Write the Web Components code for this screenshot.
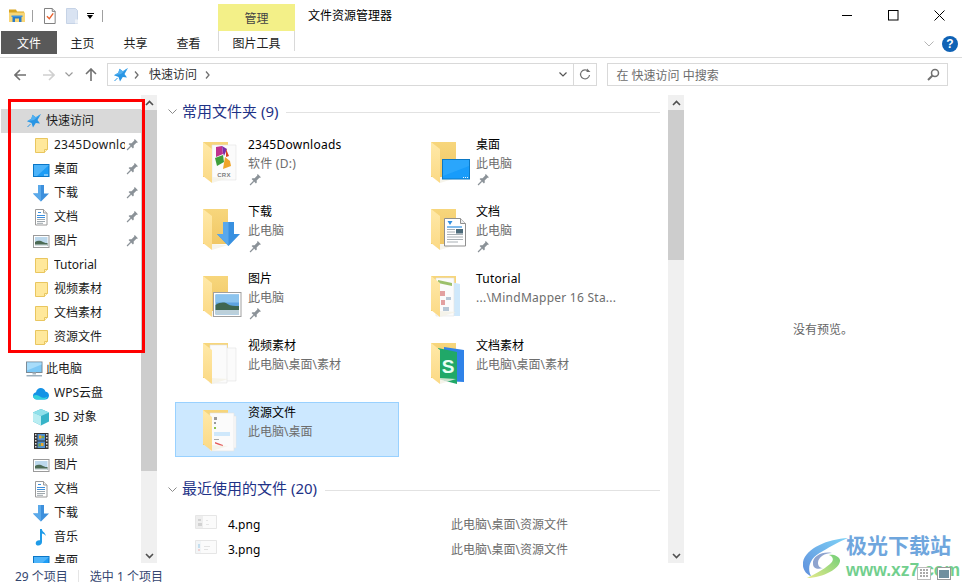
<!DOCTYPE html>
<html lang="zh">
<head>
<meta charset="utf-8">
<title>文件资源管理器</title>
<style>
  html, body { margin: 0; padding: 0; background: #fff; }
  body { font: 12px "Noto Sans", "Noto Sans CJK SC", sans-serif; color: #000; overflow: hidden; }
</style>
</head>
<body>
<x-explorer>
  <x-titlebar slot="top"></x-titlebar>
  <x-ribbon slot="top"></x-ribbon>
  <x-addressbar slot="top"></x-addressbar>

  <x-nav-pane slot="nav">
    <x-nav-row level="0" icon="star" selected>快速访问</x-nav-row>
    <x-nav-row icon="folder" pinned style="letter-spacing:.25px">2345Downloads</x-nav-row>
    <x-nav-row icon="desktop" pinned>桌面</x-nav-row>
    <x-nav-row icon="download" pinned>下载</x-nav-row>
    <x-nav-row icon="document" pinned>文档</x-nav-row>
    <x-nav-row icon="picture" pinned>图片</x-nav-row>
    <x-nav-row icon="folder">Tutorial</x-nav-row>
    <x-nav-row icon="folder">视频素材</x-nav-row>
    <x-nav-row icon="folder">文档素材</x-nav-row>
    <x-nav-row icon="folder">资源文件</x-nav-row>
    <x-nav-row level="0" icon="computer" spaced>此电脑</x-nav-row>
    <x-nav-row icon="cloud">WPS云盘</x-nav-row>
    <x-nav-row icon="cube">3D 对象</x-nav-row>
    <x-nav-row icon="film">视频</x-nav-row>
    <x-nav-row icon="picture">图片</x-nav-row>
    <x-nav-row icon="document">文档</x-nav-row>
    <x-nav-row icon="download">下载</x-nav-row>
    <x-nav-row icon="music">音乐</x-nav-row>
    <x-nav-row icon="desktop">桌面</x-nav-row>
  </x-nav-pane>

  <x-content slot="content">
    <x-group-header>常用文件夹 (9)</x-group-header>
    <x-tile-grid>
      <x-tile icon="big-crx" sub="软件 (D:)" pinned style="letter-spacing:.25px">2345Downloads</x-tile>
      <x-tile icon="big-desktop" sub="此电脑" pinned>桌面</x-tile>
      <x-tile icon="big-download" sub="此电脑" pinned>下载</x-tile>
      <x-tile icon="big-document" sub="此电脑" pinned>文档</x-tile>
      <x-tile icon="big-picture" sub="此电脑" pinned>图片</x-tile>
      <x-tile icon="big-tutorial" sub="...\MindMapper 16 Sta..." style="letter-spacing:.25px">Tutorial</x-tile>
      <x-tile icon="big-pages" sub="此电脑\桌面\素材">视频素材</x-tile>
      <x-tile icon="big-book" sub="此电脑\桌面\素材">文档素材</x-tile>
      <x-tile icon="big-source" sub="此电脑\桌面" selected>资源文件</x-tile>
    </x-tile-grid>
    <x-group-header later>最近使用的文件 (20)</x-group-header>
    <x-recent-row thumb="thumb-a" path="此电脑\桌面\资源文件">4.png</x-recent-row>
    <x-recent-row thumb="thumb-b" path="此电脑\桌面\资源文件">3.png</x-recent-row>
  </x-content>

  <x-preview slot="preview">没有预览。</x-preview>
  <x-statusbar slot="bottom"></x-statusbar>
</x-explorer>
<x-watermark></x-watermark>

<script>
// Big folder tile icons share the same back and front panels
const folderBack = `
  <defs><linearGradient id="fb" x1="0" y1="0" x2="0" y2="1"><stop offset="0" stop-color="#f7d67c"/><stop offset="1" stop-color="#f0c765"/></linearGradient>
  <linearGradient id="ff" x1="0" y1="0" x2="0" y2="1"><stop offset="0" stop-color="#ffe9a8"/><stop offset="1" stop-color="#fbd985"/></linearGradient></defs>
  <path d="M3 2h25v35H3z" fill="url(#fb)"/>`;
const folderFront = `<path d="M3 2l9 7v34l-9-7z" fill="url(#ff)"/><path d="M12 43l16-5-16-1z" fill="#f4f1e6" opacity=".8"/>`;
const bigFolder = (inside, badge = '') => folderBack + inside + folderFront + badge;

const sheet = (x, y, w, h, extra = '') =>
  `<path d="M${x} ${y}h${w}v${h}h-${w}z" fill="#fbfbfb" stroke="#e3e3e3" stroke-width=".6"/>${extra}`;

const ICONS = {
  pin: `<g transform="rotate(45 8 8)" fill="#8b9298"><path d="M5.500 1h5v1l-.8.6v4.400l1.800 1.600v1.400h-7V8.600L6.300 7V2.600L5.500 2z"/><path d="M7.300 10h1.400v6H7.300z"/></g>`,
  folder: `<path d="M2.500 1.500h12v11l-3 3h-9z" fill="#ffe89b" stroke="#e9c65f"/><path d="M11.500 15.500v-3h3" fill="#fff3c4" stroke="#e9c65f"/>`,
  desktop: `<rect x=".5" y="3.500" width="15.500" height="12" fill="#1e9df6" stroke="#0a76c6"/><path d="M1 4h15l-12 11H1z" fill="#4db4fa"/><path d="M11 14h4" stroke="#d9f0ff"/>`,
  download: `<path d="M5 0h6v8.500h5L8 16.500 0 8.500h5z" fill="#3d8fdc"/><path d="M5 0h3v16.500L0 8.500h5z" fill="#5aa9ea"/>`,
  document: `<path d="M2.500.5h8l3.500 3.500v12h-11.500z" fill="#fff" stroke="#9a9a9a"/><path d="M10.500.5v3.500h3.500" fill="#eee" stroke="#9a9a9a"/><path d="M5 3.500h3M4 6.500h8M4 8.500h8" stroke="#3d8fdc"/><path d="M4 10.500h8M4 12.500h8M4 14.300h6" stroke="#9fa8ae"/>`,
  picture: `<rect x=".5" y="2.500" width="15.500" height="12" fill="#fff" stroke="#9a9a9a"/><rect x="2" y="4" width="12.500" height="9" fill="#bcd8ec"/><path d="M2 9c3-2 6-1 8 0s3 1 4.500 1v3H2z" fill="#4c6b55"/><path d="M2 11.500h12.500V13H2z" fill="#d5dfe2"/>`,
  star: `<path d="M15 1l-3.500 6 2.500 3.500-4.200-.5L7 14.500 5.500 10 1 8.200l4.300-2.400L6.500 1.800l3.300 2.400z" fill="#2a96e4"/><path d="M15 1L9.800 4.200 6.500 1.800 5.300 5.800 1 8.200l7-1.200z" fill="#52b0f0"/><path d="M1.500 14L4.500 11" stroke="#2a96e4"/>`,
  computer: `<rect x=".5" y="1" width="15.500" height="10.500" fill="#7cc8f6" stroke="#7b8a96"/><path d="M1 1.500h14.500v2L1 9.500z" fill="#a7dcfa"/><path d="M6.500 11.500h3.500v2h-3.500z" fill="#a9b6bf"/><path d="M.5 14h15.500v1.500H.5z" fill="#9cafbc"/>`,
  cloud: `<path d="M4 14.500C1.500 14.500 0 12.800 0 10.800 0 9 1.200 7.600 3 7.300 3.400 4.800 5.300 3 7.800 3c2.200 0 4 1.400 4.600 3.400 2 .2 3.600 2 3.600 4 0 2.300-1.800 4.100-4 4.100z" fill="#1492e6"/><path d="M0 11c3-2 5-1 7 .5s5 2 7.500 0c-.6 2-1.800 3-3.500 3H4c-2 0-3.600-1.300-4-3.500z" fill="#34d0dd"/>`,
  cube: `<path d="M8 0l8 3.500v9L8 16.500 0 12.500v-9z" fill="#37b4c8"/><path d="M8 0l8 3.500-8 3.500-8-3.500z" fill="#8fe0ea"/><path d="M0 3.500L8 7v9.500L0 12.500z" fill="#b9edf2"/>`,
  film: `<rect x="1" y="0" width="14.500" height="16" fill="#333"/><path d="M2 1h1.500v1.500H2zM2 4h1.500v1.500H2zM2 7h1.500v1.500H2zM2 10h1.500v1.500H2zM2 13h1.500v1.500H2zM13 1h1.500v1.500H13zM13 4h1.500v1.500H13zM13 7h1.500v1.500H13zM13 10h1.500v1.500H13zM13 13h1.500v1.500H13z" fill="#ddd"/><rect x="4.500" y="1" width="7.500" height="6.500" fill="#4f8fd0"/><rect x="4.500" y="8.500" width="7.500" height="6.500" fill="#4f8fd0"/><path d="M6 2.500h2.500v3H6zM8 10h2.500v3H8z" fill="#e9a92c"/><path d="M9 3h2v2H9zM5.500 10.500h2v3h-2z" fill="#7aa83f"/>`,
  music: `<path d="M7 0h1.800c.4 3 3.900 3.600 3.900 7-.9-1.500-2.200-2.300-3.700-2.500V13c0 2-1.700 3.500-3.700 3.500-1.500 0-2.600-.9-2.600-2.300 0-1.700 1.800-3 3.400-3 .3 0 .6 0 .9.100z" fill="#1f9be8"/>`,
  'qat-folder': `<path d="M0 5V1.500h7l1 2h7V5z" fill="#d9a520"/><path d="M0 4.500h16V14H0z" fill="#f9d677"/><path d="M3.500 8h9v6h-2.500v-3.500h-4V14H3.500z" fill="#2b7bc8"/><path d="M2.500 7.500h11V9h-11z" fill="#3f94de"/>`,
  'qat-check': `<path d="M.5.5h8l3 3v12.500H.5z" fill="#fff" stroke="#7d7d7d"/><path d="M8.500.5v3h3" fill="#eee" stroke="#7d7d7d"/><path d="M3 8.500l2.500 2.500L9.500 5.500" fill="none" stroke="#e8602c" stroke-width="1.400"/>`,
  'qat-blank': `<path d="M.5.5h9l2 2v13H.5z" fill="#d9e3f2" stroke="#c6d3e6"/><path d="M9 11.500h3v4H9z" fill="#eef2f8"/>`,
  'big-crx': bigFolder(sheet(12, 5, 24, 35, `
      <path d="M16 7l6-1 1 8-7 3z" fill="#c0318e"/><path d="M22 6l5 3-3 7-1-3z" fill="#7a2ea8"/><path d="M15 18l8-3 1 7-7 4z" fill="#3f9e3a"/>
      <path d="M25 17l5 4 1 5-8 3z" fill="#f0a52a"/><path d="M26 9l3 7-3 1z" fill="#d8401f"/>
      <text x="24" y="36.500" text-anchor="middle" font-family="Liberation Sans, sans-serif" font-size="6" font-weight="700" fill="#7d7d7d">CRX</text>`)),
  'big-desktop': bigFolder('', `<rect x="14.500" y="19.500" width="27" height="19.500" fill="#189cfb" stroke="#0b78c4"/><path d="M15 20h26v6L15 36z" fill="#32abfc" opacity=".7"/><path d="M35 37.500h5" stroke="#e8f6ff" stroke-dasharray="1 1"/>`),
  'big-download': bigFolder('', `<path d="M23 15h11v12h6L28.500 39 17 27h6z" fill="#3890e0"/><path d="M23 15h5.500v24L17 27h6z" fill="#58a8ec"/>`),
  'big-document': bigFolder('', `<path d="M16.500 11.500h16l5 5v22.500h-21z" fill="#fff" stroke="#8f8f8f"/><path d="M32.500 11.500v5h5" fill="#eee" stroke="#8f8f8f"/><path d="M19 20h15" stroke="#2f8fe0" stroke-width="1.200"/><path d="M19.500 14h5l-2.500 4z" fill="#2f8fe0"/><path d="M19 22.500h8M19 25h8M19 27.500h16M19 30h16M19 32.500h16M19 35h11" stroke="#a9b0b5"/><rect x="28" y="22" width="7" height="4.500" fill="#4c6b7a"/>`),
  'big-picture': bigFolder('', `<rect x="13.500" y="18.500" width="27.500" height="24" fill="#fff" stroke="#a0a0a0"/><rect x="15.500" y="20.500" width="23.500" height="20" fill="#5fa4e0"/><path d="M15.500 20.500H39v8H15.500z" fill="#8cc4ee"/><path d="M15.500 31c5-3 9-3 12-1s7 2 11.500 2v4H15.500z" fill="#3f6650"/><path d="M15.500 36H39v4.500H15.500z" fill="#bcd0da"/>`),
  'big-tutorial': bigFolder(`<path d="M14 6l18 4v32H14z" fill="#cfe8fb"/>` + sheet(8, 4, 18, 38, `
      <path d="M10 6l14 3v3l-14-3z" fill="#9cc06a"/><path d="M12 17h5v5h-5zM13 26h4v5h-4z" fill="#e3a0a0"/><path d="M18 23h5v3h-5zM15 33h6v4h-6z" fill="#b7c7d6"/>`)),
  'big-pages': bigFolder(sheet(18, 7, 18, 33) + sheet(10, 4, 17, 38)),
  'big-book': bigFolder(`<path d="M16 6l20 3v32l-20-1z" fill="#2f82e8"/><path d="M10 7l19 4v32L10 38z" fill="#20a868"/>`
      + `<text x="20" y="32" text-anchor="middle" font-family="Liberation Sans, sans-serif" font-size="19" font-weight="700" fill="#e9fff4">S</text>`),
  'big-source': bigFolder(sheet(22, 8, 14, 32) + sheet(10, 5, 24, 38, `
      <path d="M14 9h3v3h-3zM14 14h2v2h-2z" fill="#9a9a9a"/><path d="M14 19h2v2h-2z" fill="#8bc34a"/><path d="M14 24h16v4H14z" fill="#cfe8fb"/><path d="M15 34l8 3v1.500l-8-3z" fill="#e45b5b"/><path d="M14 31h5v1h-5z" fill="#aaa"/>`)),
  'thumb-a': `<path d="M.5 1.500h21v13H.5z" fill="#fbfbfb" stroke="#e6e6e6"/><path d="M1 2h7v12H1z" fill="#eeeeee"/><path d="M3 5h3v2H3zM3 9h4v3H3z" fill="#d2d2d2"/><path d="M11 6h2v1h-2zM11 10h3v1h-3z" fill="#e6e6e6"/>`,
  'thumb-b': `<path d="M.5 1.500h21v13H.5z" fill="#fbfbfb" stroke="#e6e6e6"/><path d="M1 2h5v12H1z" fill="#f2f5f7"/><path d="M3 5h2v4H3z" fill="#c4deef"/><path d="M3 10h2v2H3z" fill="#efd0d0"/><path d="M9 7h6v1H9zM9 10h4v1H9z" fill="#e2e2e2"/>`
};

const VIEWS = { pin: '0 0 16 16', 'qat-folder': '0 0 16 16', 'qat-check': '0 0 12 16.500', 'qat-blank': '0 0 12.500 16' };

class XIcon extends HTMLElement {
    connectedCallback() {
        const name = this.getAttribute('name');
        const size = this.getAttribute('size') || 16;
        const box = VIEWS[name] || `0 0 ${size} ${size}`;
        this.attachShadow({ mode: 'open' }).innerHTML = `
            <style>:host { display: block; width: ${size}px; height: ${size}px; flex: none; } svg { display: block; overflow: visible; }</style>
            <svg width="${size}" height="${size}" viewBox="${box}" preserveAspectRatio="xMinYMid">${ICONS[name] || ''}</svg>`;
    }
}

class XExplorer extends HTMLElement {
    connectedCallback() {
        this.attachShadow({ mode: 'open' }).innerHTML = `
            <style>
                :host { display: flex; flex-direction: column; width: 962px; height: 588px; background: #fff; }
                .main { display: flex; height: 468px; overflow: hidden; }
                ::slotted([slot="preview"]) { flex: 1; }
            </style>
            <slot name="top"></slot>
            <div class="main">
                <slot name="nav"></slot>
                <slot name="content"></slot>
                <slot name="preview"></slot>
            </div>
            <slot name="bottom"></slot>`;
    }
}

class XTitlebar extends HTMLElement {
    connectedCallback() {
        this.attachShadow({ mode: 'open' }).innerHTML = `
            <style>
                :host { display: flex; height: 31px; }
                .qat { width: 218px; display: flex; align-items: center; padding-left: 9px; box-sizing: border-box; }
                .sep { width: 1px; height: 12px; background: #a0a0a0; margin: 0 11px 0 7px; }
                .caret { margin-left: 5px; margin-right: 8px; width: 7px; }
                .caret i { display: block; height: 1px; background: #000; margin-bottom: 1px; }
                .caret b { display: block; width: 0; border: 3.5px solid transparent; border-top: 4px solid #000; border-bottom: 0; }
                .manage { width: 77px; margin-top: 4px; background: #f3f088; color: #444; display: flex; align-items: center; justify-content: center; }
                .title { margin-left: 13px; flex: 1; line-height: 31px; }
                .btn { width: 46px; display: flex; align-items: center; justify-content: center; }
                svg { display: block; }
            </style>
            <div class="qat">
                <x-icon name="qat-folder" size="16"></x-icon>
                <div class="sep"></div>
                <x-icon name="qat-check" size="16"></x-icon>
                <div style="width:6px"></div>
                <x-icon name="qat-blank" size="16"></x-icon>
                <div class="caret"><i></i><b></b></div>
                <div class="sep" style="margin:0"></div>
            </div>
            <div class="manage">管理</div>
            <div class="title">文件资源管理器</div>
            <div class="btn"><svg width="10" height="2"><path d="M0 .5h10" stroke="#000"/></svg></div>
            <div class="btn"><svg width="11" height="11"><rect x=".5" y=".5" width="9.500" height="9.500" fill="none" stroke="#000"/></svg></div>
            <div class="btn"><svg width="11" height="11"><path d="M.5.5l10 10M10.500.5l-10 10" stroke="#000"/></svg></div>`;
    }
}

class XRibbon extends HTMLElement {
    connectedCallback() {
        const tabs = ['主页', '共享', '查看'].map(t => `<div class="tab">${t}</div>`).join('');
        this.attachShadow({ mode: 'open' }).innerHTML = `
            <style>
                :host { display: flex; height: 26px; padding-left: 1px; border-bottom: 1px solid #dadada; color: #222; }
                .file { width: 56px; height: 23px; background: #595959; color: #fff; display: flex; align-items: center; justify-content: center; }
                .tab { width: 53px; height: 23px; display: flex; align-items: center; justify-content: center; margin-left: -1px; margin-right: 1px; }
                .tool { width: 77px; height: 20px; box-sizing: border-box; margin-left: 2px; padding-top: 3px; border: solid #d9d9d9; border-width: 0 1px; display: flex; align-items: center; justify-content: center; }
                .right { margin-left: auto; display: flex; align-items: center; height: 23px; padding: 0 4px 0 0; gap: 8px; margin-top: 1px; }
                .help { width: 16px; height: 16px; border-radius: 50%; background: #0f62b5; color: #fff; font: bold 12px/16px "Liberation Sans", sans-serif; text-align: center; }
            </style>
            <div class="file">文件</div>
            ${tabs}
            <div class="tool">图片工具</div>
            <div class="right">
                <svg width="10" height="6"><path d="M.5.5l4.500 4.500 4.500-4.500" fill="none" stroke="#b5b5b5"/></svg>
                <div class="help">?</div>
            </div>`;
    }
}

class XAddressbar extends HTMLElement {
    connectedCallback() {
        const chev = '<svg width="6" height="8"><path d="M1 .5l3 3.500-3 3.500" fill="none" stroke="#707070" stroke-width="1.300"/></svg>';
        const down = c => `<svg width="8" height="5"><path d="M.5.5l3.500 3.500 3.500-3.500" fill="none" stroke="${c}" stroke-width="1.200"/></svg>`;
        this.attachShadow({ mode: 'open' }).innerHTML = `
            <style>
                :host { display: flex; height: 37px; box-sizing: border-box; padding: 5px 14px 9px 0; align-items: stretch; }
                .nav { width: 107px; display: flex; align-items: center; flex: none; }
                .nav > * { flex: none; }
                .box { border: 1px solid #d9d9d9; box-sizing: border-box; display: flex; align-items: center; }
                .addr { width: 468px; padding-left: 5px; color: #333; }
                .addr .path { margin-bottom: 2px; }
                .addr span { margin: 0 8px 0 8px; }
                .fill { flex: 1; }
                .refresh { width: 23px; justify-content: center; margin-left: 0; border-left: 0; }
                .search { width: 341px; margin-left: 10px; padding: 0 7px 0 8px; color: #6d6d6d; justify-content: space-between; }
                svg { display: block; }
            </style>
            <div class="nav">
                <svg style="margin-left:14px" width="12" height="12"><path d="M6 1L1 6l5 5M1 6h11" fill="none" stroke="#707070" stroke-width="1.600"/></svg>
                <svg style="margin-left:17px" width="12" height="12"><path d="M6 1l5 5-5 5M11 6H0" fill="none" stroke="#d0d0d0" stroke-width="1.600"/></svg>
                <svg style="margin-left:10px" width="8" height="5"><path d="M.5.5l3.500 3.500 3.500-3.500" fill="none" stroke="#9a9a9a" stroke-width="1.200"/></svg>
                <svg style="margin-left:12px" width="12" height="13"><path d="M1 6l5-5 5 5M6 1v12" fill="none" stroke="#707070" stroke-width="1.600"/></svg>
            </div>
            <div class="box addr">
                <x-icon name="star" size="16"></x-icon>
                <span style="margin-left:5px;margin-right:9px;display:flex">${chev}</span>
                <div class="path">快速访问</div>
                <span style="display:flex">${chev}</span>
                <div class="fill"></div>
                <span style="display:flex;margin:0 6px 0 0">${down('#555')}</span>
            </div>
            <div class="box refresh">
                <svg width="12" height="13"><path d="M9.500 3.500A4.500 4.500 0 1 0 10.500 7" fill="none" stroke="#707070" stroke-width="1.200"/><path d="M7 .5l3.500 3.500H6.500z" fill="#707070" transform="translate(1 0)"/></svg>
            </div>
            <div class="box search">
                在 快速访问 中搜索
                <svg width="13" height="13"><circle cx="8" cy="5" r="3.500" fill="none" stroke="#707070" stroke-width="1.500"/><path d="M5.500 7.500L1 12" stroke="#707070" stroke-width="2"/></svg>
            </div>`;
    }
}

class XScrollbar extends HTMLElement {
    connectedCallback() {
        const offset = this.getAttribute('offset') || 0;
        const thumb = this.getAttribute('thumb') || 100;
        this.attachShadow({ mode: 'open' }).innerHTML = `
            <style>
                :host { display: flex; flex-direction: column; width: 16px; height: 100%; flex: none; background: #f0f0f0; }
                .arrow { height: 15px; display: flex; align-items: center; justify-content: center; flex: none; }
                .thumb { height: ${thumb}px; background: #cdcdcd; flex: none; margin-top: ${offset}px; }
                .fill { flex: 1; }
            </style>
            <div class="arrow"><svg width="9" height="6"><path d="M1 5l3.500-3.500L8 5" fill="none" stroke="#505050" stroke-width="1.600"/></svg></div>
            <div class="thumb"></div>
            <div class="fill"></div>
            <div class="arrow"><svg width="9" height="6"><path d="M1 1l3.500 3.500L8 1" fill="none" stroke="#505050" stroke-width="1.600"/></svg></div>`;
    }
}

class XNavPane extends HTMLElement {
    connectedCallback() {
        this.attachShadow({ mode: 'open' }).innerHTML = `
            <style>
                :host { display: flex; width: 157px; height: 100%; flex: none; }
                .list { width: 141px; padding-top: 14px; box-sizing: border-box; overflow: hidden; }
            </style>
            <div class="list"><slot></slot></div>
            <x-scrollbar thumb="361"></x-scrollbar>`;
    }
}

class XNavRow extends HTMLElement {
    connectedCallback() {
        const top = this.getAttribute('level') === '0';
        const selected = this.hasAttribute('selected');
        const pinned = this.hasAttribute('pinned');
        this.attachShadow({ mode: 'open' }).innerHTML = `
            <style>
                :host { display: flex; height: 24px; align-items: center; color: #1a1a1a; margin-left: 1px; box-sizing: border-box;
                    padding-left: ${top ? 25 : 32}px; background: ${selected ? '#d9d9d9' : 'transparent'};
                    ${this.hasAttribute('spaced') ? 'margin-top: 8px;' : ''} }
                .label { margin: 0 0 2px ${top ? 4 : 5}px; flex: 1; min-width: 0; overflow: hidden; white-space: nowrap; }
                .pin { width: 16px; flex: none; }
            </style>
            <x-icon name="${this.getAttribute('icon')}" size="16"></x-icon>
            <span class="label"><slot></slot></span>
            <span class="pin">${pinned ? '<x-icon name="pin" size="14"></x-icon>' : ''}</span>`;
    }
}

class XContent extends HTMLElement {
    connectedCallback() {
        this.attachShadow({ mode: 'open' }).innerHTML = `
            <style>
                :host { display: flex; width: 527px; height: 100%; flex: none; }
                .scroll { width: 511px; padding-top: 6px; box-sizing: border-box; overflow: hidden; }
            </style>
            <div class="scroll"><slot></slot></div>
            <x-scrollbar thumb="150"></x-scrollbar>`;
    }
}

class XGroupHeader extends HTMLElement {
    connectedCallback() {
        const later = this.hasAttribute('later');
        this.attachShadow({ mode: 'open' }).innerHTML = `
            <style>
                :host { display: flex; align-items: center; height: 22px; padding: 0 8px 0 11px; color: #1e3287; font-size: 15px;
                    ${later ? 'margin-top: 22px;' : ''} white-space: nowrap; }
                svg { flex: none; margin-right: 5px; }
                .label { margin-bottom: ${later ? 6 : 4}px; }
                .line { flex: 1; height: 1px; background: #e2e2e2; margin: 1px 0 0 8px; }
            </style>
            <svg width="9" height="6"><path d="M.5.5l4 4 4-4" fill="none" stroke="#8a8a8a"/></svg>
            <span class="label"><slot></slot></span>
            <div class="line"></div>`;
    }
}

class XTileGrid extends HTMLElement {
    connectedCallback() {
        this.attachShadow({ mode: 'open' }).innerHTML = `
            <style>
                :host { display: grid; grid-template-columns: 224px 224px; column-gap: 4px; row-gap: 12px; padding: 11px 0 0 18px; }
            </style>
            <slot></slot>`;
    }
}

class XTile extends HTMLElement {
    connectedCallback() {
        const selected = this.hasAttribute('selected');
        this.attachShadow({ mode: 'open' }).innerHTML = `
            <style>
                :host { display: flex; height: 55px; box-sizing: border-box; border: 1px solid ${selected ? '#99d1ff' : 'transparent'};
                    background: ${selected ? '#cce8ff' : 'transparent'}; line-height: 18px; }
                .icon { margin: 5px 0 0 24px; }
                .text { min-width: 0; white-space: nowrap; padding-top: 1px; }
                .sub { color: #6d6d6d; margin-top: 1px; }
                .pin { height: 14px; display: flex; align-items: center; }
            </style>
            <x-icon class="icon" name="${this.getAttribute('icon')}" size="48"></x-icon>
            <div class="text">
                <div><slot></slot></div>
                <div class="sub">${this.getAttribute('sub') || ''}</div>
                ${this.hasAttribute('pinned') ? '<div class="pin"><x-icon name="pin" size="14"></x-icon></div>' : ''}
            </div>`;
    }
}

class XRecentRow extends HTMLElement {
    connectedCallback() {
        this.attachShadow({ mode: 'open' }).innerHTML = `
            <style>
                :host { display: grid; grid-template-columns: 33px 223px 1fr; align-items: center; height: 25px; padding-left: 38px; }
                .name, .path { margin-bottom: 1px; }
                .path { color: #6d6d6d; }
            </style>
            <x-icon name="${this.getAttribute('thumb')}" size="22"></x-icon>
            <div class="name"><slot></slot></div>
            <div class="path">${this.getAttribute('path') || ''}</div>`;
        if (this.previousElementSibling && this.previousElementSibling.localName === 'x-group-header') {
            this.style.marginTop = '11px';
        }
    }
}

class XPreview extends HTMLElement {
    connectedCallback() {
        this.attachShadow({ mode: 'open' }).innerHTML = `
            <style>:host { display: flex; align-items: center; justify-content: center; color: #666; height: 100%; box-sizing: border-box; }</style>
            <slot></slot>`;
    }
}

class XStatusbar extends HTMLElement {
    connectedCallback() {
        this.attachShadow({ mode: 'open' }).innerHTML = `
            <style>
                :host { display: flex; align-items: center; height: 25px; padding-left: 15px; color: #34466f; }
                .sep { width: 1px; height: 12px; background: #e5e5e5; margin: 0 11px 0 10px; }
            </style>
            <span>29 个项目</span><div class="sep"></div><span>选中 1 个项目</span>`;
    }
}

// Red annotation and site logo sit over the window, so they are absolute
class XWatermark extends HTMLElement {
    connectedCallback() {
        this.attachShadow({ mode: 'open' }).innerHTML = `
            <style>
                :host { display: block; }
                .mark { position: absolute; left: 8px; top: 99px; width: 137px; height: 254px; border: 3px solid #f00; box-sizing: border-box; }
                .logo { position: absolute; left: 803px; top: 529px; width: 159px; height: 59px; }
                svg.swirl { position: absolute; left: 0; top: 9px; }
                .cn { position: absolute; left: 43px; top: 0; font: bold 21px/30px "Noto Sans CJK SC", sans-serif; color: #6fa6dd; white-space: nowrap; }
                .en { position: absolute; left: 43px; top: 30px; font: bold 17.500px/22px "Liberation Sans", sans-serif; color: #72cf8e; white-space: nowrap; }
                svg.views { position: absolute; left: 114px; top: 38px; }
            </style>
            <div class="mark"></div>
            <div class="logo">
                <svg class="swirl" width="45" height="41" viewBox="0 0 45 41">
                    <defs>
                        <linearGradient id="wb" x1="1" y1="0" x2="0" y2="1"><stop offset="0" stop-color="#7fd3f7"/><stop offset="1" stop-color="#5f8fdc"/></linearGradient>
                        <linearGradient id="wg" x1="0" y1="1" x2="1" y2="0"><stop offset="0" stop-color="#e5e98a"/><stop offset="1" stop-color="#73cf78"/></linearGradient>
                    </defs>
                    <path d="M45 0C25 1 3 10 0 24c-1 7 3 12 8 14C4 30 6 20 20 13 28 8 38 3 45 0z" fill="url(#wb)"/>
                    <path d="M10 26c-1-8 10-13 19-11-7 0-14 4-14 10 0 3 2 5 5 5-6 2-10 0-10-4z" fill="#8ea4cf"/>
                    <path d="M4 40c16 0 34-10 33-18-1-4-7-6-11-5 5 2 5 6 1 9-7 6-15 10-23 14z" fill="url(#wg)"/>
                </svg>
                <div class="cn">极光下载站</div>
                <div class="en">www.xz7.com</div>
                <svg class="views" width="34" height="14">
                    <rect x=".5" y=".5" width="13" height="12" fill="#fff" stroke="#bbb"/>
                    <path d="M3 3h8M3 6h8M3 9h8" stroke="#555" stroke-dasharray="2 1"/>
                    <rect x="20.500" y=".5" width="13" height="12" fill="#fff" stroke="#999"/>
                    <rect x="22" y="3" width="10" height="8" fill="#6f8f9e"/>
                </svg>
            </div>`;
    }
}

customElements.define('x-icon', XIcon);
customElements.define('x-explorer', XExplorer);
customElements.define('x-titlebar', XTitlebar);
customElements.define('x-ribbon', XRibbon);
customElements.define('x-addressbar', XAddressbar);
customElements.define('x-scrollbar', XScrollbar);
customElements.define('x-nav-pane', XNavPane);
customElements.define('x-nav-row', XNavRow);
customElements.define('x-content', XContent);
customElements.define('x-group-header', XGroupHeader);
customElements.define('x-tile-grid', XTileGrid);
customElements.define('x-tile', XTile);
customElements.define('x-recent-row', XRecentRow);
customElements.define('x-preview', XPreview);
customElements.define('x-statusbar', XStatusbar);
customElements.define('x-watermark', XWatermark);
</script>
</body>
</html>
